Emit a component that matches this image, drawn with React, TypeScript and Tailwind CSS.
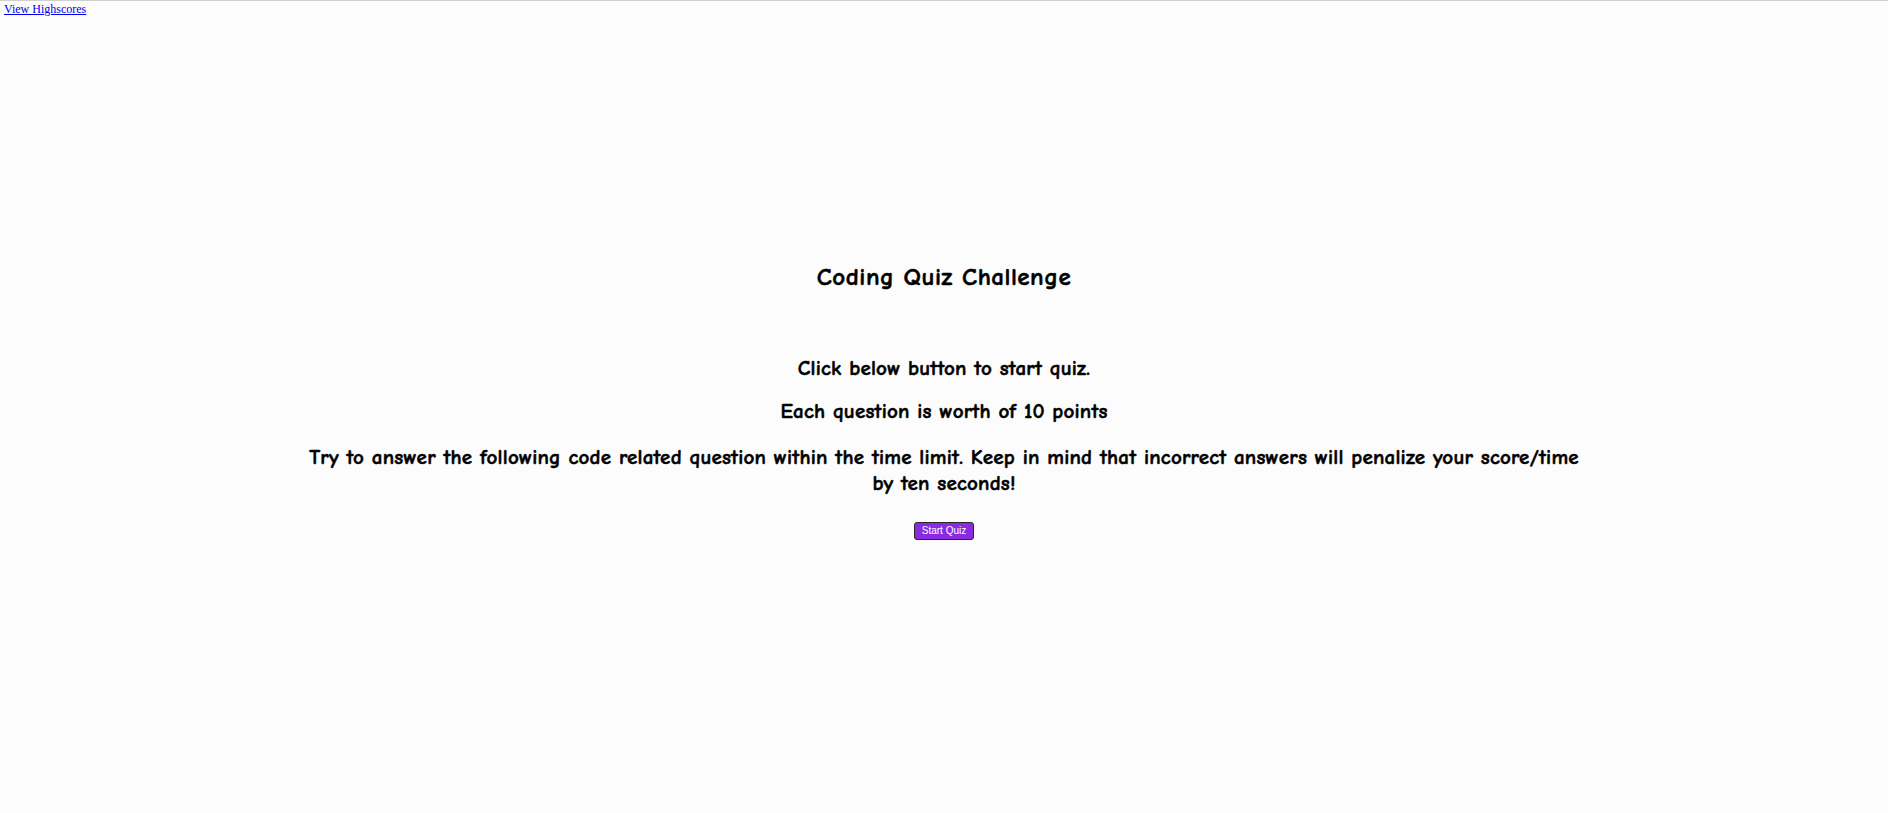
import React from "react";

export default function App() {
  const comic = { fontFamily: '"Comic Sans MS", "Comic Neue", "Open Sans", sans-serif' };
  return (
    <div className="min-h-[813px] w-full bg-[#fcfcfc] border-t border-[#d0d0d0]">
      <header
        className="pl-[4px] pt-[2px] h-[17px] text-[12px] leading-[13px]"
        style={{ fontFamily: '"Liberation Serif", "Times New Roman", serif' }}
      >
        <a href="#" className="text-[#0000ee] underline">
          View Highscores
        </a>
      </header>
      <main
        className="flex flex-col items-center text-center text-black pt-[244px] [-webkit-text-stroke:0.5px_#000]"
        style={comic}
      >
        <h1 className="text-[25px] leading-[30px] font-bold tracking-[0.5px]">Coding Quiz Challenge</h1>
        <p className="mt-[62px] text-[21px] leading-[28px] font-bold tracking-[0.2px]">
          Click below button to start quiz.
        </p>
        <p className="mt-[15px] text-[21px] leading-[28px] font-bold tracking-[0.2px]">
          Each question is worth of 10 points
        </p>
        <p className="mt-[19px] w-[1292px] text-[21px] leading-[26px] font-bold tracking-[0.2px]">
          Try to answer the following code related question within the time limit. Keep in mind that incorrect answers will penalize your score/time by ten seconds!
        </p>
        <button
          className="mt-[26px] w-[60px] h-[18px] bg-[#8a2be2] border border-[#2a2a2a] rounded-[3px] text-white text-[10px] leading-none [-webkit-text-stroke:0px]"
          style={{ fontFamily: '"Liberation Sans", Arial, sans-serif' }}
        >
          Start Quiz
        </button>
      </main>
    </div>
  );
}
